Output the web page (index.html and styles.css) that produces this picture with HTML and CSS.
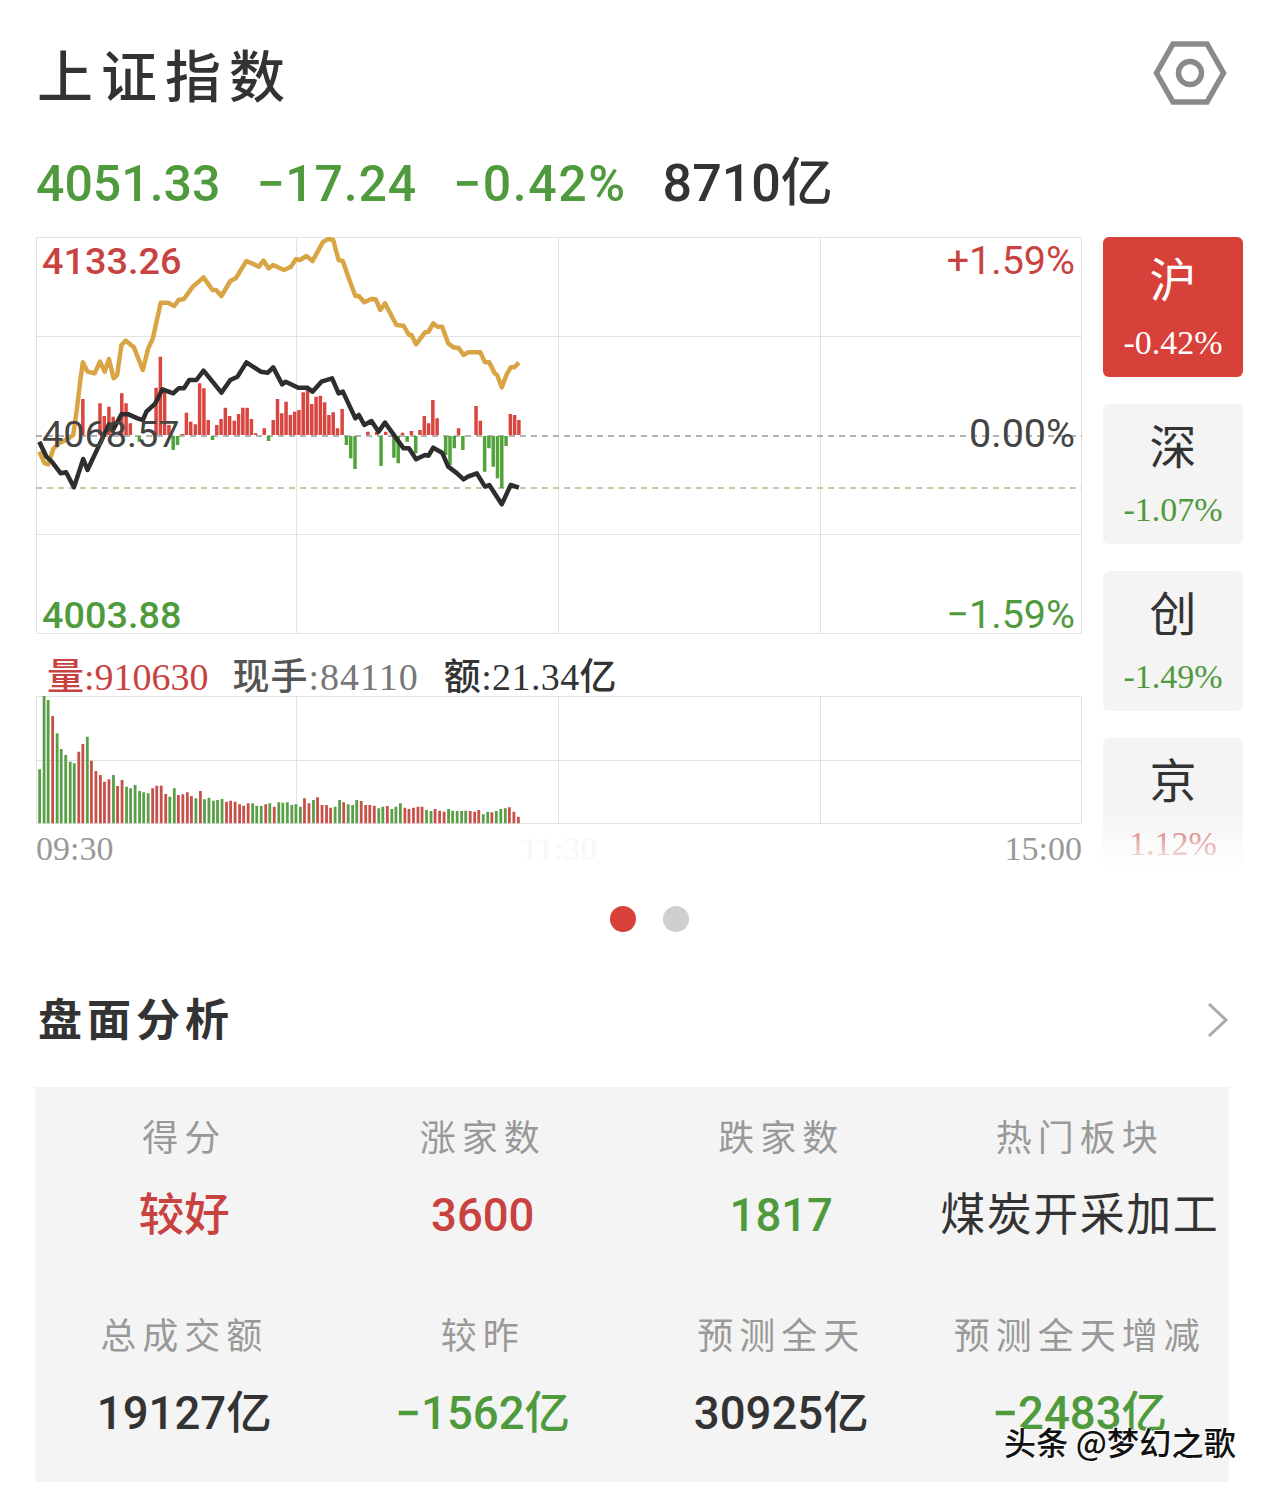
FILE: index.html
```html
<!DOCTYPE html>
<html>
<head>
	<meta charset="UTF-8">
	<title>上证指数</title>
	<link rel="stylesheet" href="styles.css">
</head>
<body>
	<header class="top">
		<h1 class="title">上证指数</h1>
		<svg class="gear" width="74" height="64" viewBox="0 0 74 64">
			<path d="M20 3H54L70.500 32L54 61H20L3.500 32Z"/>
			<circle cx="37" cy="32" r="11.500"/>
		</svg>
	</header>

	<div class="stats">
		<span class="down">4051.33</span>
		<span class="down change">−17.24</span>
		<span class="down percent">−0.42%</span>
		<span class="turnover">8710亿</span>
	</div>

	<section class="board">
		<div class="charts">
			<div class="price">
				<svg class="chart" width="1046" height="397" viewBox="0 0 1046 397">
					<path class="grid" d="M.5 .5H1045.500V396.500H.5ZM0 99.500H1046M0 297.500H1046M260.500 0V397M522.500 0V397M784.500 0V397"/>
					<path class="dash" d="M0 199H1046"/>
					<path class="dash prev" d="M0 251H1046"/>
					<g transform="translate(-36,-7) scale(.35714,.33333)">
						<path class="bar up" d="M232 615V507M280 615V520M292 615V558M305 615V530M317 615V560M341 615V490M353 615V520M365 615V580M437 615V473M449 615V380M461 615V480M473 615V585M510 615V612M522 615V548M534 615V575M547 615V583M559 615V460M571 615V475M583 615V570M607 615V585M619 615V567M631 615V533M643 615V558M656 615V572M668 615V552M680 615V533M692 615V533M704 615V567M716 615V610M740 615V595M765 615V570M777 615V507M789 615V550M801 615V515M813 615V555M825 615V545M837 615V540M849 615V487M861 615V480M873 615V522M885 615V500M897 615V497M909 615V517M921 615V555M933 615V547M945 615V595M958 615V537M1030 615V605M1055 615V605M1080 615V605M1127 615V608M1152 615V603M1176 615V600M1188 615V558M1200 615V580M1212 615V510M1224 615V565M1284 615V595M1333 615V528M1345 615V572M1429 615V552M1441 615V555M1453 615V570"/>
						<path class="bar fall" d="M390 618V635M485 618V660M497 618V645M595 618V630M752 618V633M970 618V645M982 618V685M994 618V717M1067 618V708M1103 618V683M1115 618V700M1140 618V635M1164 618V670M1248 618V675M1260 618V705M1272 618V655M1296 618V660M1357 618V725M1369 618V655M1381 618V710M1393 618V745M1405 618V775M1417 618V648"/>
						<polyline class="line gold" points="110,665 125,700 135,703 150,655 165,640 185,630 205,615 215,540 225,450 232,397 245,425 265,430 280,395 293,425 305,387 318,445 328,435 340,345 352,332 375,352 400,420 415,355 428,325 450,218 470,218 488,228 500,210 515,207 540,170 570,142 595,180 605,180 620,198 645,153 660,145 690,93 725,110 738,92 752,115 765,105 795,120 815,110 828,88 840,90 858,78 875,93 905,35 920,27 933,30 948,90 960,93 975,140 995,198 1005,198 1020,217 1040,207 1052,208 1065,240 1078,220 1110,285 1130,287 1145,315 1152,315 1165,343 1190,307 1200,305 1213,280 1225,290 1238,290 1255,340 1270,352 1285,355 1298,375 1310,367 1345,367 1358,397 1370,397 1385,430 1392,435 1405,472 1418,435 1430,412 1440,412 1453,398"/>
						<polyline class="line black" points="110,635 130,680 145,695 170,730 185,727 207,772 233,687 245,720 305,583 318,597 340,553 360,553 385,565 400,570 410,545 435,520 455,478 485,490 500,475 515,475 530,450 550,450 570,422 620,488 645,450 665,440 690,397 730,425 750,428 765,412 790,463 800,455 835,473 860,473 875,485 900,455 930,445 948,490 960,485 995,565 1005,555 1020,585 1040,573 1060,605 1078,578 1130,655 1145,655 1165,688 1190,675 1200,677 1213,653 1238,668 1255,710 1280,730 1298,748 1310,740 1335,730 1358,770 1370,765 1405,823 1430,765 1453,773"/>
					</g>
				</svg>
				<span class="axis high up-text">4133.26</span>
				<span class="axis base">4068.57</span>
				<span class="axis low down">4003.88</span>
				<span class="axis high pct up-text">+1.59%</span>
				<span class="axis base pct">0.00%</span>
				<span class="axis low pct down">−1.59%</span>
			</div>

			<div class="quote">
				<span class="q-vol"><b>量</b>:910630</span>
				<span class="q-hand"><b>现手</b>:84110</span>
				<span class="q-amt"><b>额</b>:21.34<b>亿</b></span>
			</div>

			<svg class="chart" width="1046" height="128" viewBox="0 0 1046 128">
				<path class="grid" d="M.5 .5H1045.500V127.500H.5ZM0 64.500H1046M260.500 0V128M522.500 0V128M784.500 0V128"/>
				<g transform="translate(-36,-56) scale(.40816,.33333)">
					<path class="vol fall" d="M97 550V388M108 550V165M118 550V180M140 550V280M150 550V327M161 550V345M172 550V365M182 550V370M214 550V290M278 550V405M310 550V440M320 550V445M331 550V435M342 550V453M352 550V457M363 550V460M416 550V470M427 550V445M480 550V475M501 550V478M512 550V473M523 550V482M533 550V480M544 550V477M619 550V490M629 550V497M640 550V498M661 550V490M683 550V487M693 550V488M704 550V487M715 550V495M725 550V493M736 550V500M768 550V480M821 550V500M832 550V480M853 550V493M864 550V495M874 550V480M928 550V505M938 550V500M960 550V507M970 550V500M981 550V490M1045 550V510M1056 550V513M1099 550V507M1109 550V512M1120 550V513M1131 550V513M1141 550V512M1184 550V523M1195 550V515M1216 550V513M1227 550V507M1238 550V505"/>
					<path class="vol up" d="M129 550V228M193 550V335M203 550V312M224 550V362M235 550V393M246 550V405M256 550V425M267 550V418M288 550V438M299 550V420M374 550V445M384 550V437M395 550V437M406 550V462M437 550V465M448 550V463M459 550V457M469 550V468M491 550V453M555 550V485M565 550V482M576 550V485M587 550V493M597 550V497M608 550V490M651 550V493M672 550V500M746 550V475M757 550V490M778 550V472M789 550V495M800 550V495M810 550V503M842 550V487M885 550V483M896 550V495M906 550V495M917 550V497M949 550V498M992 550V503M1002 550V507M1013 550V503M1024 550V500M1034 550V500M1066 550V507M1077 550V512M1088 550V515M1152 550V513M1163 550V515M1173 550V510M1205 550V517M1248 550V502M1259 550V515M1270 550V530"/>
				</g>
			</svg>

			<div class="times">
				<span>09:30</span>
				<span class="ghost">11:30</span>
				<span>15:00</span>
			</div>
		</div>

		<nav class="tabs">
			<a class="tab active"><b>沪</b><span>-0.42%</span></a>
			<a class="tab"><b>深</b><span class="down">-1.07%</span></a>
			<a class="tab"><b>创</b><span class="down">-1.49%</span></a>
			<a class="tab"><b>京</b><span class="up-text">1.12%</span></a>
		</nav>
	</section>

	<div class="dots">
		<i class="dot on"></i>
		<i class="dot"></i>
	</div>

	<div class="sec-head">
		<h2>盘面分析</h2>
		<svg width="22" height="36" viewBox="0 0 22 36"><path d="M2 2L19 18L2 34"/></svg>
	</div>

	<section class="panel">
		<div class="cell"><p>得分</p><strong class="up-text">较好</strong></div>
		<div class="cell"><p>涨家数</p><strong class="up-text">3600</strong></div>
		<div class="cell"><p>跌家数</p><strong class="down">1817</strong></div>
		<div class="cell"><p>热门板块</p><strong class="wide">煤炭开采加工</strong></div>
		<div class="cell"><p>总成交额</p><strong>19127亿</strong></div>
		<div class="cell"><p>较昨</p><strong class="down">−1562亿</strong></div>
		<div class="cell"><p>预测全天</p><strong>30925亿</strong></div>
		<div class="cell"><p>预测全天增减</p><strong class="down">−2483亿</strong></div>
	</section>

	<div class="mark">头条 @梦幻之歌</div>
</body>
</html>
```

FILE: styles.css
```css
body,h1,h2,p{
	margin: 0;
}
body{
	position: relative;
	height: 1486px;
	overflow: hidden;
	background: #fff;
	color: #333;
	font-family: Roboto, "Noto Sans CJK SC", sans-serif;
}
.down{color: #4f9a3c}
.up-text{color: #c8423f}

.top{
	display: flex;
	justify-content: space-between;
	align-items: center;
	height: 146px;
	padding: 0 37px 0 37px;
}
.title{
	font: 500 56px/1 "Noto Sans CJK SC", sans-serif;
	letter-spacing: 8px;
}
.gear path,.gear circle{
	fill: none;
	stroke: #8a8a8a;
	stroke-width: 5.500;
}

.stats{
	display: flex;
	gap: 36px;
	height: 91px;
	padding: 8px 0 0 36px;
	box-sizing: border-box;
	font-size: 50px;
	font-weight: 500;
	line-height: 60px;
	white-space: nowrap;
}
.change{letter-spacing: .8px}
.percent{letter-spacing: 1.600px}
.turnover{
	font-size: 52px;
	color: #333;
}

.board{
	display: flex;
	gap: 21px;
	height: 633px;
	padding-left: 36px;
}
.charts{
	width: 1046px;
}
.price{
	position: relative;
	height: 397px;
}
.chart{
	display: block;
}
.grid{
	fill: none;
	stroke: #e2e2e2;
	stroke-width: 1;
}
.dash{
	fill: none;
	stroke: #999;
	stroke-width: 1.500;
	stroke-dasharray: 6 5;
}
.dash.prev{stroke: #b9b68c}
.bar,.vol,.line{
	fill: none;
	vector-effect: non-scaling-stroke;
}
.bar{stroke-width: 3.500}
.vol{stroke-width: 2.800}
.bar.up{stroke: #d9453f}
.bar.fall{stroke: #53a33b}
.vol.up{stroke: #c8504a}
.vol.fall{stroke: #5a9e48}
.line{
	stroke-width: 4.500;
	stroke-linejoin: round;
}
.gold{stroke: #d9a443}
.black{stroke: #2e2e2e}

.axis{
	position: absolute;
	left: 6px;
	font-size: 37.800px;
	font-weight: 500;
	line-height: 44px;
	white-space: nowrap;
}
.axis.pct{
	left: auto;
	right: 7px;
	font-size: 39.500px;
	font-weight: 400;
}
.high{top: 2px}
.base{
	top: 175px;
	color: #444;
	font-weight: 400;
}
.low{top: 356px}

.quote{
	display: flex;
	gap: 25px;
	align-items: center;
	height: 62px;
	padding: 18px 0 0 11px;
	box-sizing: border-box;
	font-family: "Liberation Serif", "Noto Sans CJK SC", serif;
	font-size: 38px;
	white-space: nowrap;
}
.quote b{
	font-family: "Noto Sans CJK SC", sans-serif;
	font-size: 37px;
	font-weight: 500;
}
.q-vol{color: #c8423f}
.q-hand{
	margin-left: -1px;
	letter-spacing: 1px;
	color: #777;
}
.q-hand b{color: #555}
.q-amt{
	letter-spacing: .4px;
	color: #333;
}

.times{
	display: flex;
	justify-content: space-between;
	padding-top: 3px;
	font-family: "Liberation Serif", serif;
	font-size: 34px;
	line-height: 44px;
	color: #999;
}
.ghost{color: #f8f8f8}

.tabs{
	position: relative;
	display: flex;
	flex-direction: column;
	gap: 27px;
	width: 140px;
	height: 633px;
	overflow: hidden;
}
.tabs:after{
	content: "";
	position: absolute;
	left: 0; right: 0; bottom: 0;
	height: 62px;
	background: linear-gradient(rgba(255,255,255,0), #fff);
}
.tab{
	flex: none;
	display: flex;
	flex-direction: column;
	align-items: center;
	height: 140px;
	padding-top: 10px;
	box-sizing: border-box;
	background: #f4f4f4;
	border-radius: 6px;
}
.tab b{
	font: 400 47px/60px "Noto Sans CJK SC", sans-serif;
	color: #333;
}
.tab span{
	margin-top: 16px;
	font: 34px/40px "Liberation Serif", serif;
}
.tab.active{
	background: #d8403a;
	color: #fff;
}
.tab.active b{color: #fff}

.dots{
	display: flex;
	justify-content: center;
	gap: 27px;
	padding-top: 36px;
	padding-left: 35px;
}
.dot{
	width: 26px;
	height: 26px;
	border-radius: 50%;
	background: #cfcfcf;
}
.dot.on{background: #d8403a}

.sec-head{
	display: flex;
	justify-content: space-between;
	align-items: center;
	height: 60px;
	margin-top: 58px;
	padding: 0 35px 0 38px;
}
.sec-head h2{
	padding-bottom: 6px;
	font: 700 44px/1 "Noto Sans CJK SC", sans-serif;
	letter-spacing: 5px;
}
.sec-head path{
	fill: none;
	stroke: #aaa;
	stroke-width: 3;
}

.panel{
	display: grid;
	grid-template-columns: repeat(4, 1fr);
	width: 1194px;
	height: 395px;
	margin: 37px 0 0 35px;
	background: #f4f4f4;
}
.cell{
	height: 198px;
	padding-top: 28px;
	box-sizing: border-box;
	text-align: center;
	white-space: nowrap;
}
.cell p{
	font: 400 36px/40px "Noto Sans CJK SC", sans-serif;
	letter-spacing: 6px;
	color: #999;
}
.cell strong{
	display: block;
	margin-top: 31px;
	font-size: 45.500px;
	font-weight: 500;
	line-height: 60px;
}
.cell strong.wide{
	font-size: 45px;
	letter-spacing: 1.500px;
	font-weight: 400;
}

.mark{
	position: absolute;
	left: 1004px;
	top: 1422px;
	font: 500 32px/38px "Noto Sans CJK SC", sans-serif;
	letter-spacing: .2px;
	color: #111;
	text-shadow: 1px 1px 0 #fff, -1px -1px 0 #fff;
	white-space: nowrap;
}
```
